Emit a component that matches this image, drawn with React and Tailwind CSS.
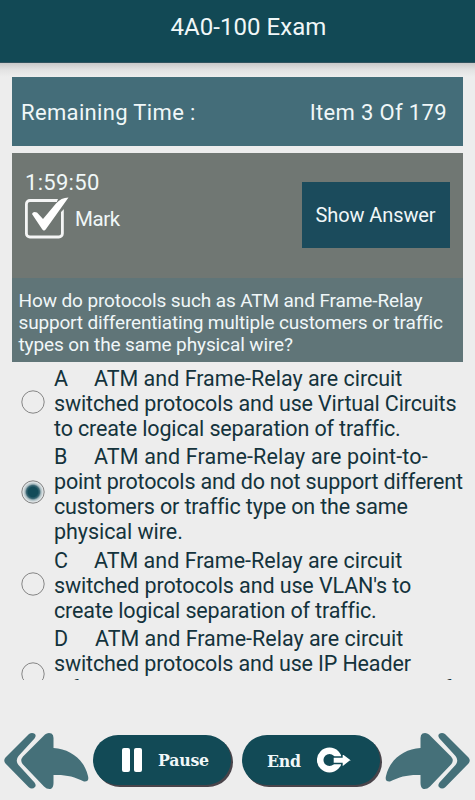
const options = [
  {
    id: 'A',
    height: 'h-[78.5px]',
    lines: [
      ['ATM and Frame-Relay are circuit', 'tracking-[0px]'],
      ['switched protocols and use Virtual Circuits', 'tracking-[-0.14px]'],
      ['to create logical separation of traffic.', 'tracking-[-0.14px]'],
    ],
  },
  {
    id: 'B',
    height: 'h-[103.5px]',
    selected: true,
    lines: [
      ['ATM and Frame-Relay are point-to-', 'tracking-[0.15px]'],
      ['point protocols and do not support different', 'tracking-[-0.19px]'],
      ['customers or traffic type on the same', 'tracking-[-0.13px]'],
      ['physical wire.', 'tracking-[-0.05px]'],
    ],
  },
  {
    id: 'C',
    height: 'h-[78.5px]',
    lines: [
      ['ATM and Frame-Relay are circuit', 'tracking-[0px]'],
      ["switched protocols and use VLAN's to", 'tracking-[-0.11px]'],
      ['create logical separation of traffic.', 'tracking-[-0.14px]'],
    ],
  },
  {
    id: 'D',
    height: 'h-[103.5px]',
    lines: [
      ['ATM and Frame-Relay are circuit', 'tracking-[0px]'],
      ['switched protocols and use IP Header', 'tracking-[-0.14px]'],
      ['information to create logical separation of', 'tracking-[-0.08px]'],
    ],
  },
];

function Radio({ selected }) {
  return (
    <svg viewBox="0 0 24 24" className="size-6">
      <defs>
        <radialGradient id="dot">
          <stop offset="0.48" stopColor="#124b59" />
          <stop offset="0.66" stopColor="#3c6875" />
          <stop offset="0.8" stopColor="#a9bbc0" />
          <stop offset="1" stopColor="#dfe5e7" />
        </radialGradient>
      </defs>
      <circle cx="12" cy="12" r="11.2" fill={selected ? '#dde1e3' : 'none'} stroke="#858585" strokeWidth="1" />
      {selected && <circle cx="12" cy="12" r="10" fill="url(#dot)" />}
    </svg>
  );
}

function Option({ id, lines, height, selected }) {
  return (
    <div className={`flex shrink-0 ${height}`}>
      <div className={`w-[42px] shrink-0 pl-[9px] ${id === 'A' || id === 'C' ? 'pt-[24px]' : 'pt-[36px]'}`}>
        <Radio selected={selected} />
      </div>
      <div className="whitespace-nowrap text-[21.5px] leading-[25px] text-[#14333c]">
        {lines.map(([text, tracking], i) => (
          <div key={i} className={`flex ${tracking}`}>
            {i === 0 && <span className={id === 'D' ? 'w-[41px]' : 'w-[40px]'}>{id}</span>}
            <span>{text}</span>
          </div>
        ))}
      </div>
    </div>
  );
}

function Arrow({ flip }) {
  return (
    <svg viewBox="0 0 86 58" className={`h-[58px] w-[86px] ${flip ? '-scale-x-100' : ''}`} fill="#457079">
      <path d="M25 2Q28 0 31 2Q32.500 4 30.500 6.500L14.500 24Q11 28.500 14.500 33L30.500 50.500Q32.500 53 31 55Q28 58 24.500 55L1.500 31.500Q-1 28.500 1.500 25.500Z" />
      <path d="M41 2.500Q44 0 47.500 1.500Q49.500 2.500 49.500 6V16C66 17 80 27 84 44Q85.500 50 80 49.500C70 44.500 62 42.500 49.500 43V51Q49.500 56 46.500 57Q43 57.500 40 54.500L19 32.500Q15.500 28.500 19 24.500Z" />
    </svg>
  );
}

export default function App() {
  return (
    <div className="flex h-[800px] w-[475px] flex-col overflow-hidden bg-[#ededed] font-['Roboto','Liberation_Sans',sans-serif] text-[#f0f7f8]">
      <header className="flex h-[63px] shrink-0 justify-center border-b border-[#31535f] bg-[#124955] pt-[11px] pl-[22px]">
        <h1 className="whitespace-nowrap text-[24px] leading-8 tracking-[0.05px]">4A0-100 Exam</h1>
      </header>
      <div className="h-[14px] shrink-0 bg-linear-to-b from-[#c9c9c9] via-[#e3e3e3] to-[#ededed]" />
      <main className="mx-3 flex w-[451px] shrink-0 flex-col">
        <div className="flex h-[69px] items-center justify-between bg-[#446d79] pt-[2px] pr-4 pl-[9px] text-[22px] tracking-[0.35px] whitespace-nowrap">
          <span>Remaining Time :</span>
          <span>Item 3 Of 179</span>
        </div>
        <section className="mt-[7px] flex h-[125px] justify-between bg-[#707773] pr-[13px] pl-[13px]">
          <div className="flex flex-col pt-[16px]">
            <span className="h-[27px] text-[22px] leading-7 tracking-[0.3px]">1:59:50</span>
            <div className="flex items-center">
              <svg viewBox="0 0 46 46" className="size-[46px]">
                <rect x="1.400" y="4.500" width="36" height="36.500" rx="3.500" fill="none" stroke="#f4f5f5" strokeWidth="2.800" />
                <path d="M33 3H44L40 12L35 17V8H31Z" fill="#707773" />
                <path d="M7 18Q8 15 12 16.500L18 23L31 7.500Q36 1.500 43.500 1.500L21 33Q19 36 17 33Z" fill="#fff" />
              </svg>
              <span className="ml-[4px] text-[20.5px] leading-6 tracking-[-0.4px]">Mark</span>
            </div>
          </div>
          <button className="mt-[29px] h-[66px] w-[148px] bg-[#1b4b5c] pr-[1px] text-[20px] tracking-[-0.1px] whitespace-nowrap">Show Answer</button>
        </section>
        <section className="h-[84px] bg-[#607578] pt-[12px] pl-[6.5px] text-[19px] leading-[21.8px] tracking-[-0.11px] whitespace-nowrap">
          <p>How do protocols such as ATM and Frame-Relay</p>
          <p className="tracking-[-0.17px]">support differentiating multiple customers or traffic</p>
          <p>types on the same physical wire?</p>
        </section>
        <section className="flex h-[318px] flex-col overflow-hidden pt-[3.5px]">
          {options.map((o) => (
            <Option key={o.id} {...o} />
          ))}
        </section>
      </main>
      <footer className="mt-[52px] flex h-[60px] shrink-0 items-start pl-[4px]">
        <Arrow />
        <button className="mt-[3px] ml-[3px] flex h-[50px] w-[138px] items-center rounded-full bg-[#124a56] pl-[29px] font-['DejaVu_Serif_Condensed','DejaVu_Serif',serif] text-[17.5px] font-bold shadow-[2px_2px_0_#49444a]">
          <span className="flex gap-[4px]">
            <i className="h-6 w-[8px] rounded-[2px] bg-white" />
            <i className="h-6 w-[8px] rounded-[2px] bg-white" />
          </span>
          <span className="ml-[16px] tracking-[-0.2px]">Pause</span>
        </button>
        <button className="mt-[3px] ml-[11px] flex h-[50px] w-[138px] items-center rounded-full bg-[#124a56] pl-[25px] font-['DejaVu_Serif_Condensed','DejaVu_Serif',serif] text-[17.5px] font-bold shadow-[2px_2px_0_#49444a]">
          <span className="w-[50px] pt-[3px] text-left tracking-[-0.2px]">End</span>
          <svg viewBox="0 0 34 26" className="h-[26px] w-[34px]">
            <circle cx="12.500" cy="13" r="9.300" fill="none" stroke="#fff" strokeWidth="6.500" />
            <path d="M16 10H25V6L34.500 13L25 20.500V16.500H16Z" fill="#fff" stroke="#124a56" strokeWidth="1.400" />
          </svg>
        </button>
        <div className="ml-[4px]">
          <Arrow flip />
        </div>
      </footer>
    </div>
  );
}
